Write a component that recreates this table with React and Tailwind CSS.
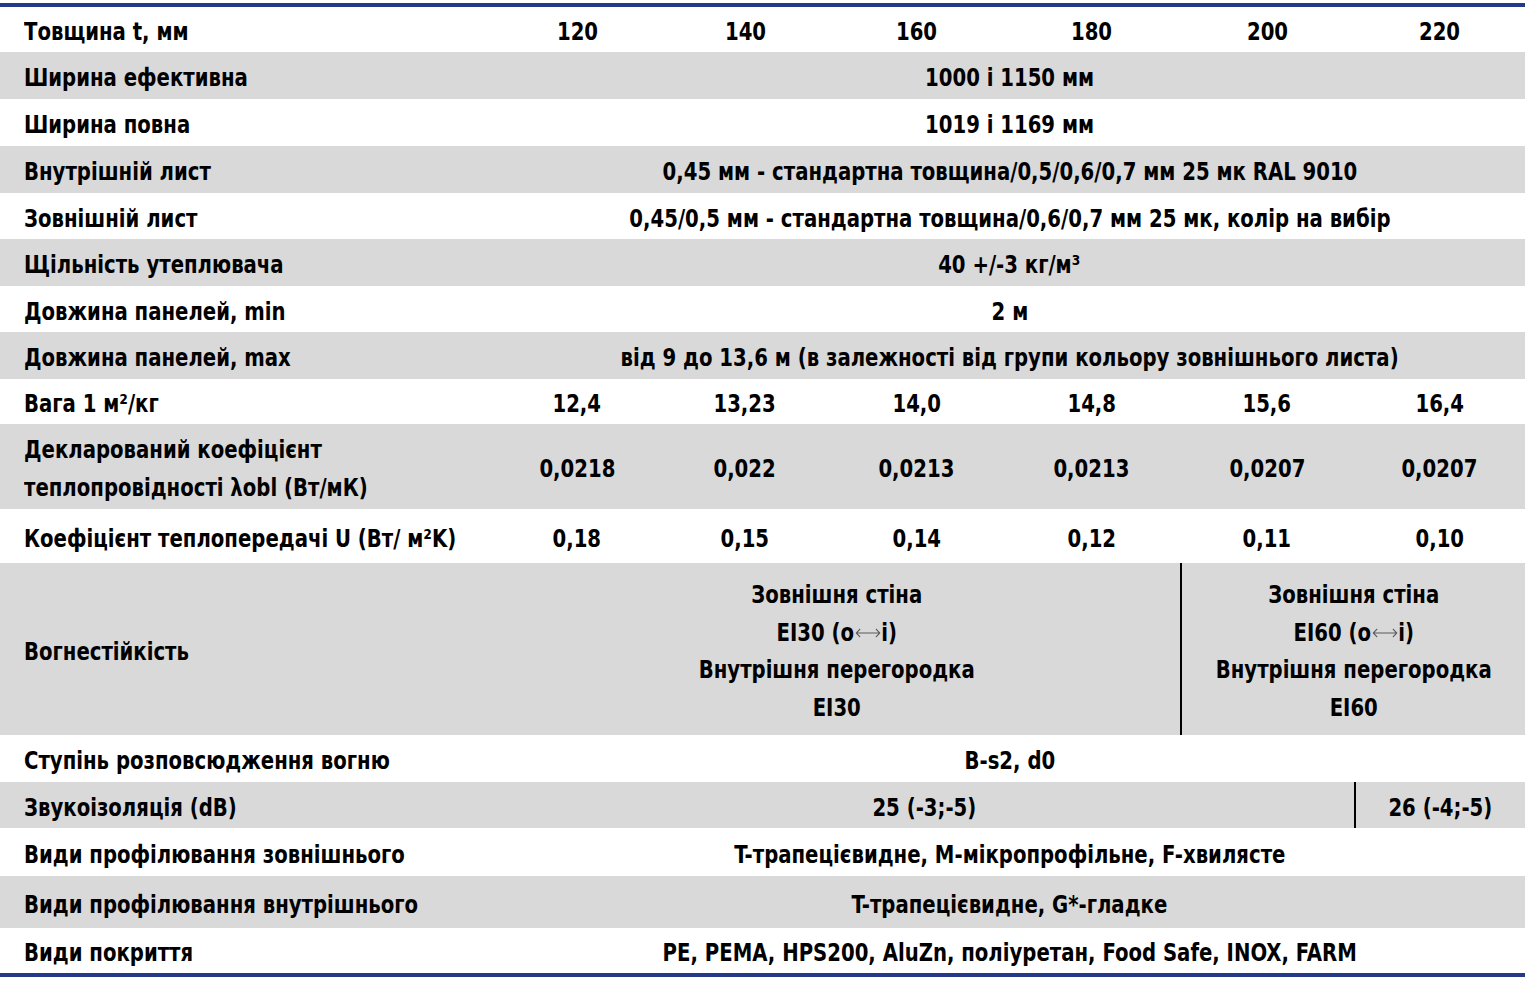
import React from "react";

const cols = "grid grid-cols-[494px_166px_170px_173px_177px_174px_171px]";

// condensed look: the installed faces are wider than the original, so squeeze them a bit
const Label = ({ children }) => (
  <span className="inline-block whitespace-nowrap origin-left scale-x-[0.875]">{children}</span>
);

const Txt = ({ children, className = "" }) => (
  <span className={`inline-block whitespace-nowrap origin-center scale-x-[0.875] ${className}`}>{children}</span>
);

const Row = ({ gray, h, label, children }) => (
  <div className={`${cols} ${gray ? "bg-[#d9d9d9]" : "bg-white"} ${h}`}>
    <div className="flex items-center pl-6 pt-1">
      <Label>{label}</Label>
    </div>
    {children}
  </div>
);

const Cell = ({ span = "", children, className = "" }) => (
  <div className={`flex items-center justify-center text-center pt-1 ${span} ${className}`}>
    <Txt>{children}</Txt>
  </div>
);

const Values = ({ items }) => items.map((v, i) => <Cell key={i}>{v}</Cell>);

const Arrow = () => (
  <svg width="29" height="10" viewBox="0 0 29 10" className="inline-block align-middle mx-[1px] relative top-[-1px]">
    <path d="M1 5H28M5.5 1L1 5l4.5 4M23.5 1L28 5l-4.5 4" fill="none" stroke="#5a5a5a" strokeWidth="1.1" />
  </svg>
);

const Fire = ({ code }) => (
  <span className="block leading-[37.5px]">
    Зовнішня стіна
    <br />
    {code} (o<Arrow />i)
    <br />
    Внутрішня перегородка
    <br />
    {code}
  </span>
);

export default function App() {
  return (
    <div className="bg-white min-h-screen pt-[3px]">
      <div
        className="w-[1525px] border-y-4 border-[#24398a] text-black font-bold text-[25px] leading-none"
        style={{ fontFamily: "'DejaVu Sans Condensed', 'DejaVu Sans', sans-serif" }}
      >
        <Row h="h-[45px]" label="Товщина t, мм">
          <Values items={["120", "140", "160", "180", "200", "220"]} />
        </Row>
        <Row gray h="h-[47px]" label="Ширина ефективна">
          <Cell span="col-span-6">1000 і 1150 мм</Cell>
        </Row>
        <Row h="h-[47px]" label="Ширина повна">
          <Cell span="col-span-6">1019 і 1169 мм</Cell>
        </Row>
        <Row gray h="h-[47px]" label="Внутрішній лист">
          <Cell span="col-span-6">0,45 мм - стандартна товщина/0,5/0,6/0,7 мм 25 мк RAL 9010</Cell>
        </Row>
        <Row h="h-[46px]" label="Зовнішній лист">
          <Cell span="col-span-6">0,45/0,5 мм - стандартна товщина/0,6/0,7 мм 25 мк, колір на вибір</Cell>
        </Row>
        <Row gray h="h-[47px]" label="Щільність утеплювача">
          <Cell span="col-span-6">40 +/-3 кг/м³</Cell>
        </Row>
        <Row h="h-[46px]" label="Довжина панелей, min">
          <Cell span="col-span-6">2 м</Cell>
        </Row>
        <Row gray h="h-[47px]" label="Довжина панелей, max">
          <Cell span="col-span-6">від 9 до 13,6 м (в залежності від групи кольору зовнішнього листа)</Cell>
        </Row>
        <Row h="h-[45px]" label="Вага 1 м²/кг">
          <Values items={["12,4", "13,23", "14,0", "14,8", "15,6", "16,4"]} />
        </Row>
        <Row
          gray
          h="h-[85px]"
          label={
            <span className="block leading-[38px]">
              Декларований коефіцієнт
              <br />
              теплопровідності λobl (Вт/мК)
            </span>
          }
        >
          <Values items={["0,0218", "0,022", "0,0213", "0,0213", "0,0207", "0,0207"]} />
        </Row>
        <Row h="h-[54px]" label="Коефіцієнт теплопередачі U (Вт/ м²K)">
          <Values items={["0,18", "0,15", "0,14", "0,12", "0,11", "0,10"]} />
        </Row>
        <Row gray h="h-[172px]" label="Вогнестійкість">
          <Cell span="col-span-4">
            <Fire code="EI30" />
          </Cell>
          <Cell span="col-span-2" className="border-l-2 border-black">
            <Fire code="EI60" />
          </Cell>
        </Row>
        <Row h="h-[47px]" label="Ступінь розповсюдження вогню">
          <Cell span="col-span-6">B-s2, d0</Cell>
        </Row>
        <Row gray h="h-[46px]" label="Звукоізоляція (dB)">
          <Cell span="col-span-5">25 (-3;-5)</Cell>
          <Cell className="border-l-2 border-black">26 (-4;-5)</Cell>
        </Row>
        <Row h="h-[48px]" label="Види профілювання зовнішнього">
          <Cell span="col-span-6">T-трапецієвидне, M-мікропрофільне, F-хвилясте</Cell>
        </Row>
        <Row gray h="h-[52px]" label="Види профілювання внутрішнього">
          <Cell span="col-span-6">T-трапецієвидне, G*-гладке</Cell>
        </Row>
        <Row h="h-[45px]" label="Види покриття">
          <Cell span="col-span-6">PE, PEMA, HPS200, AluZn, поліуретан, Food Safe, INOX, FARM</Cell>
        </Row>
      </div>
    </div>
  );
}
